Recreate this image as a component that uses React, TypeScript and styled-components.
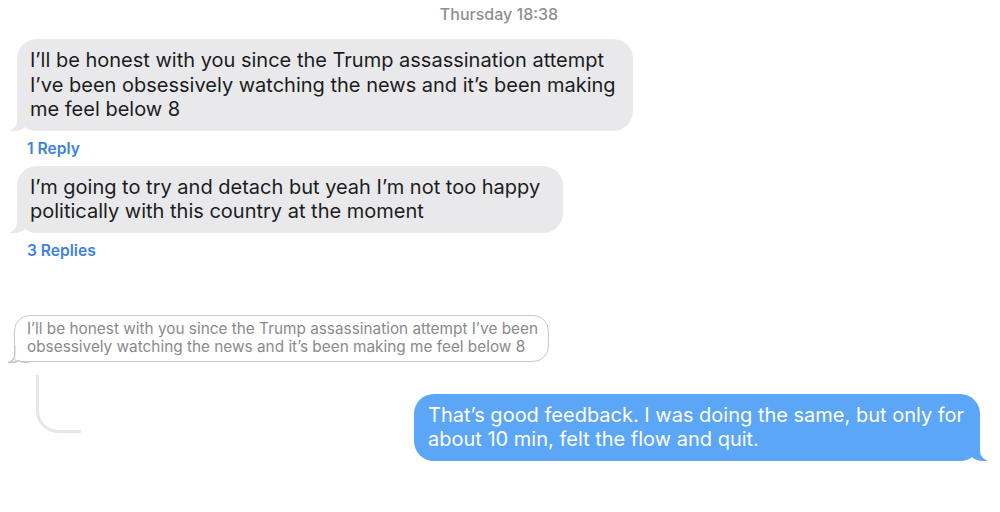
import React from "react";
import styled, { createGlobalStyle } from "styled-components";

const Global = createGlobalStyle`
  html, body { margin: 0; padding: 0; background: #ffffff; }
  body { width: 1000px; height: 512px; overflow: hidden; }
`;

const FONT = `Inter, Roboto, "Liberation Sans", Arial, sans-serif`;

const Page = styled.div`
  width: 1000px;
  height: 512px;
  box-sizing: border-box;
  display: flex;
  flex-direction: column;
  font-family: ${FONT};
  background: #fff;
`;

const Timestamp = styled.div`
  text-align: center;
  font-size: 16px;
  font-weight: 500;
  color: #8e8e93;
  line-height: 18px;
  padding-top: 5px;
  margin-left: -2px;
`;

const Thread = styled.div`
  display: flex;
  flex-direction: column;
  align-items: flex-start;
  padding-left: 17px;
`;

const Bubble = styled.div<{ $w: number; $mt: number }>`
  position: relative;
  box-sizing: border-box;
  width: ${(p) => p.$w}px;
  margin-top: ${(p) => p.$mt}px;
  padding: 9px 12px 9px 13px;
  background: #e9e9eb;
  color: #1c1c1e;
  border-radius: 20px;
  font-size: 20px;
  line-height: 24.5px;
  white-space: nowrap;

  &::before {
    content: "";
    position: absolute;
    z-index: 0;
    bottom: 0;
    left: -7px;
    height: 20px;
    border-right: 20px solid #e9e9eb;
    border-bottom-right-radius: 16px 14px;
  }
  &::after {
    content: "";
    position: absolute;
    z-index: 1;
    bottom: 0;
    left: -26px;
    width: 26px;
    height: 20px;
    background: #fff;
    border-bottom-right-radius: 10px;
  }
`;

const Text = styled.span`
  position: relative;
  z-index: 2;
`;

const ReplyLink = styled.div<{ $mt: number }>`
  margin-top: ${(p) => p.$mt}px;
  padding-left: 10px;
  font-size: 15.6px;
  font-weight: 600;
  color: #3d82e0;
  line-height: 18px;
`;

const QuoteWrap = styled.div`
  position: relative;
  margin-top: 55px;
  margin-left: -3px;
`;

const Quote = styled.div`
  box-sizing: border-box;
  width: 535px;
  padding: 4px 10px 5px 12px;
  border: 1.5px solid #c9c9cc;
  border-radius: 16px;
  border-bottom-left-radius: 4px;
  color: #8a8a8e;
  font-size: 15.35px;
  line-height: 18px;
  white-space: nowrap;
  background: #fff;
`;

const QuoteTail = styled.svg`
  position: absolute;
  left: -7px;
  bottom: -1px;
  width: 22px;
  height: 18px;
  overflow: visible;
`;

const BottomRow = styled.div`
  display: flex;
  align-items: flex-start;
  justify-content: space-between;
  margin-top: 13px;
  padding-right: 20px;
`;

const ThreadLine = styled.div`
  margin-left: 36px;
  width: 42px;
  height: 55px;
  border-left: 3px solid #e7e7e9;
  border-bottom: 3px solid #e7e7e9;
  border-bottom-left-radius: 22px;
`;

const SentBubble = styled.div`
  position: relative;
  box-sizing: border-box;
  width: 566px;
  margin-top: 19px;
  padding: 9px 12px 9px 14px;
  background: #5ba6f6;
  color: #ffffff;
  border-radius: 20px;
  font-size: 20px;
  line-height: 24.5px;
  white-space: nowrap;

  &::before {
    content: "";
    position: absolute;
    z-index: 0;
    bottom: 0;
    right: -7px;
    height: 20px;
    border-left: 20px solid #5ba6f6;
    border-bottom-left-radius: 16px 14px;
  }
  &::after {
    content: "";
    position: absolute;
    z-index: 1;
    bottom: 0;
    right: -26px;
    width: 26px;
    height: 20px;
    background: #fff;
    border-bottom-left-radius: 10px;
  }
`;

export default function App() {
  return (
    <>
      <Global />
      <Page>
        <Timestamp>Thursday 18:38</Timestamp>
        <Thread>
          <Bubble $w={616} $mt={16}>
            <Text>
              I’ll be honest with you since the Trump assassination attempt
              <br />
              I’ve been obsessively watching the news and it’s been making
              <br />
              me feel below 8
            </Text>
          </Bubble>
          <ReplyLink $mt={9}>1 Reply</ReplyLink>
          <Bubble $w={546} $mt={8}>
            <Text>
              I’m going to try and detach but yeah I’m not too happy
              <br />
              politically with this country at the moment
            </Text>
          </Bubble>
          <ReplyLink $mt={9}>3 Replies</ReplyLink>
          <QuoteWrap>
            <Quote>
              I’ll be honest with you since the Trump assassination attempt I’ve been
              <br />
              obsessively watching the news and it’s been making me feel below 8
            </Quote>
            <QuoteTail viewBox="0 0 22 18">
              <path d="M8.5 0 L8.5 10 C8.5 14 5 17 1 17.6 C5 18 9 17 11.5 15.5 C13 16.6 15 17 17 17 L22 17 L22 18 L0 18 Z" fill="#fff" />
              <path
                d="M7.75 0 L7.75 10 C7.75 14 4.5 16.8 1 17.4 C5 18 9 17 11.5 15.5 C13 16.6 15 17.25 17 17.25 L22 17.25"
                fill="none"
                stroke="#c9c9cc"
                strokeWidth="1.5"
              />
            </QuoteTail>
          </QuoteWrap>
        </Thread>
        <BottomRow>
          <ThreadLine />
          <SentBubble>
            <Text>
              That’s good feedback. I was doing the same, but only for
              <br />
              about 10 min, felt the flow and quit.
            </Text>
          </SentBubble>
        </BottomRow>
      </Page>
    </>
  );
}
